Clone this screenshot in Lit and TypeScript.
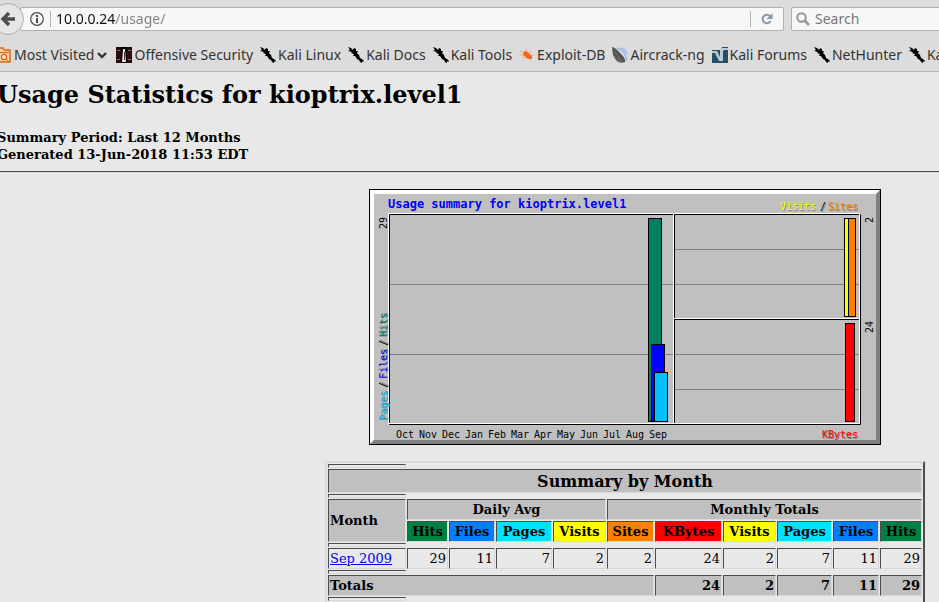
import { LitElement, html, svg, css } from "lit";
import { customElement } from "lit/decorators.js";

const kali = svg`<path d="M0 0L3 1 5 3 6 1 8 2 8 4 10 4 9 6 11 8 12 11 14 12 16 14 15 15 14 14 14 16 12 15 11 13 9 12 7 9 5 9 6 7 3 6 4 5 0 4 2 3Z" fill="#000"/>`;

const icons: Record<string, unknown> = {
  kali,
  offsec: svg`<path fill="#2a0c0c" d="M0 0h16v16H0z"/><path fill="#777" d="M1 3h3v1H1zM12 3h3v1h-3zM1 12h3v1H1zM12 12h3v1h-3z"/><path fill="#000" d="M5 0h6v16H5z"/><path fill="#e4e4e4" d="M7 2h2l1 13H6z"/><path fill="#633" d="M8 5h1v8H8z"/>`,
  exploit: svg`<path fill="#f2661f" d="M4 5l3-1 3 2 3 3v3l-3 0-3-1-3-3z"/><path d="M1 4l4 2M0 8l5 0M3 11l4-2M7 2l1 3M12 4l-2 3M15 8l-3 1M12 14l-2-2" stroke="#f5ac80"/>`,
  aircrack: svg`<path d="M0 0Q3 0 9 7Q14 12 13 15Q5 18 1 8Z" fill="#50544e"/><path d="M2 4l8 10M1 8l8 7" stroke="#777c73" fill="none"/><path d="M5 1Q13 3 15 14M9 1Q14 3 15 7" stroke="#9cb8ea" fill="none" stroke-width="1.5"/>`,
  forums: svg`<path fill="#244f69" d="M0 0h16v16H0z"/><path fill="#dcdcdc" d="M0 0h10L9 3H0z"/><path fill="#b9cbd5" d="M0 4h5l3 6V3l2-2h6v2h-4l-1 1v10H7L3 6H0z"/>`,
};

const bookmarks: [string, string][] = [
  ["offsec", "Offensive Security"],
  ["kali", "Kali Linux"],
  ["kali", "Kali Docs"],
  ["kali", "Kali Tools"],
  ["exploit", "Exploit-DB"],
  ["aircrack", "Aircrack-ng"],
  ["forums", "Kali Forums"],
  ["kali", "NetHunter"],
  ["kali", "Kali Training"],
];

@customElement("browser-chrome")
class BrowserChrome extends LitElement {
  static styles = css`
    :host { display: block; flex: none; background: #dcdcdc; border-bottom: 1px solid #b2b2b2; padding-top: 7px; overflow: hidden;
      font: 14px/20px "Noto Sans", sans-serif; color: #333; }
    .nav { display: flex; height: 24px; }
    .back { flex: none; box-sizing: border-box; width: 32px; height: 32px; margin: -4px -4px -4px -8px; padding: 0; border: 1px solid #b0b0b0;
      border-radius: 50%; background: #e6e6e6; z-index: 1; display: grid; place-items: center; }
    .field { box-sizing: border-box; height: 24px; min-width: 0; display: flex; align-items: center; background: #f7f7f7; border: 1px solid #b0b0b0; border-radius: 2px; }
    .address { flex: 1; padding-left: 9px; }
    .search { flex: 0 0 156px; margin: 0 -8px 0 7px; padding-left: 4px; gap: 5px; }
    .rule { flex: none; width: 1px; height: 16px; background: #b5b5b5; margin: 0 5px 0 6px; }
    .rule:last-of-type { margin-right: 0; }
    input { flex: 1; min-width: 0; height: 20px; padding: 0; border: 0; outline: 0; background: none; font: inherit; color: #777; }
    input::placeholder { color: #777; opacity: 1; }
    .url { background: linear-gradient(90deg, #111 59px, #808080 59px); -webkit-background-clip: text; background-clip: text; color: transparent; }
    .reload { flex: none; padding: 0; border: 0; background: none; width: 32px; height: 20px; display: grid; place-items: center; }
    .marks { display: flex; align-items: center; height: 32px; padding-top: 8px; margin-left: -5px; gap: 7px; white-space: nowrap; }
    a { display: flex; align-items: center; gap: 2px; flex: none; color: inherit; text-decoration: none; height: 32px; }
    .visited { gap: 3px; margin-right: 2px; }
    svg { display: block; flex: none; }
  `;
  render() {
    return html`
      <div class="nav">
        <button class="back" aria-label="Back"><svg width="16" height="16" viewBox="0 0 16 16"><path d="M9 2L3 8l6 6M4 8h11" fill="none" stroke="#4d4d4d" stroke-width="3.4"/></svg></button>
        <div class="field address">
          <svg width="14" height="14" viewBox="0 0 14 14"><circle cx="7" cy="7" r="6.3" fill="none" stroke="#4a4a4a" stroke-width="1.2"/><path d="M6 6h2v5H6zM6 3h2v2H6z" fill="#4a4a4a"/></svg>
          <span class="rule"></span>
          <input class="url" aria-label="Address" value="10.0.0.24/usage/">
          <span class="rule"></span>
          <button class="reload" aria-label="Reload"><svg width="12" height="12" viewBox="0 0 12 12"><path d="M9 3.2A4.2 4.2 0 1 0 9.6 8" fill="none" stroke="#8a96a3" stroke-width="2"/><path d="M11.500 0v6h-6z" fill="#8a96a3"/></svg></button>
        </div>
        <div class="field search">
          <svg width="14" height="14" viewBox="0 0 14 14"><circle cx="5.500" cy="5.500" r="4.200" fill="none" stroke="#969696" stroke-width="2"/><path d="M8.500 8.500l4.500 4.500" stroke="#969696" stroke-width="2.600"/></svg>
          <input aria-label="Search" placeholder="Search">
        </div>
      </div>
      <div class="marks">
        <a class="visited" href="#"><svg width="16" height="16" viewBox="0 0 16 16"><path d="M1 15V1h7l1 2h6v12z" fill="#f9d3ae" stroke="#d9660a" stroke-width="1.400"/><circle cx="9" cy="10" r="2.600" fill="#fbe3cb" stroke="#d9660a" stroke-width="1.200"/><path d="M2 5.500h12M11 12l3 3" stroke="#d9660a"/></svg>Most Visited<svg width="10" height="8" viewBox="0 0 10 8"><path d="M1 2l4 4 4-4" fill="none" stroke="#333" stroke-width="2.400"/></svg></a>
        ${bookmarks.map(([icon, name]) => html`<a href="#"><svg width="16" height="16" viewBox="0 0 16 16">${icons[icon]}</svg>${name}</a>`)}
      </div>`;
  }
}

const months = ["Oct", "Nov", "Dec", "Jan", "Feb", "Mar", "Apr", "May", "Jun", "Jul", "Aug", "Sep"];

const bars: [number, number, number, number, string][] = [
  [279, 29, 14, 204, "#008060"],
  [282, 155, 14, 78, "#0000ff"],
  [285, 183, 14, 50, "#00c0ff"],
  [475, 29, 8, 99, "#ffff00"],
  [479, 29, 8, 99, "#ff8000"],
  [476, 134, 10, 99, "#ff0000"],
];

@customElement("usage-chart")
class UsageChart extends LitElement {
  static styles = css`
    :host { display: block; width: 512px; height: 256px; }
    svg { display: block; }
    text { font: 10px "DejaVu Sans Mono", monospace; white-space: pre; }
    .title { font-size: 12px; font-weight: bold; fill: #00f; }
  `;
  label(x: number, y: number, text: string, fill: string) {
    return svg`<text x=${x + 1} y=${y + 1} fill="#808080">${text}</text><text x=${x} y=${y} fill=${fill}>${text}</text>`;
  }
  side(x: number, y: number, text: string, fill: string, shadow = true) {
    return svg`<g transform="translate(${x} ${y}) rotate(-90)">${shadow ? this.label(0, 0, text, fill) : svg`<text fill=${fill}>${text}</text>`}</g>`;
  }
  render() {
    const frame = svg`<path d="M19.500 24.500H490.500V234.500H19.500ZM304.500 24.500V234.500M304.500 129.500H490.500"/>`;
    return html`<svg width="512" height="256" viewBox="0 0 512 256" role="img" aria-label="Usage summary for kioptrix.level1">
      <path fill="#000" d="M0 0h512v256H0z"/>
      <path fill="#808080" d="M1 1h510v254H1z"/>
      <path fill="#fff" d="M1 1H511L507 5H5V251L1 255Z"/>
      <path fill="#c0c0c0" d="M5 5h502v246H5z"/>
      <path stroke="#808080" d="M21 95.500h283M21 165.500h283M306 60.500h184M306 95.500h184M306 165.500h184M306 200.500h184"/>
      <g fill="none" stroke="#000" transform="translate(1 1)">${frame}</g>
      <g fill="none" stroke="#fff">${frame}</g>
      ${bars.map(([x, y, w, h, c]) => svg`<rect x=${x + 0.5} y=${y + 0.5} width=${w - 1} height=${h - 1} fill=${c} stroke="#000"/>`)}
      <text class="title" x="19" y="19">Usage summary for kioptrix.level1</text>
      ${this.label(411, 21, "Visits", "#ffff00")}
      ${this.label(451, 21, "/", "#000")}
      ${this.label(459, 21, "Sites", "#ff8000")}
      ${this.label(453, 249, "KBytes", "#ff0000")}
      ${months.map((m, i) => svg`<text x=${27 + i * 23} y="249">${m}</text>`)}
      ${this.side(18, 40, "29", "#000", false)}
      ${this.side(504, 34, "2", "#000", false)}
      ${this.side(504, 144, "24", "#000", false)}
      ${this.side(18, 232, "Pages", "#00c0ff")}
      ${this.side(18, 199, "/", "#000")}
      ${this.side(18, 190, "Files", "#0000ff")}
      ${this.side(18, 157, "/", "#000")}
      ${this.side(18, 148, "Hits", "#008060")}
    </svg>`;
  }
}

const columns = [78, 41, 46, 56, 53, 47, 67, 53, 55, 46, 42];
const heads: [string, string][] = [
  ["Hits", "green"], ["Files", "blue"], ["Pages", "cyan"], ["Visits", "yellow"], ["Sites", "orange"],
  ["KBytes", "red"], ["Visits", "yellow"], ["Pages", "cyan"], ["Files", "blue"], ["Hits", "green"],
];

@customElement("summary-table")
class SummaryTable extends LitElement {
  static styles = css`
    :host { display: block; width: 600px; }
    table { width: 100%; table-layout: fixed; border: 2px solid; border-color: #d8d8d8 #4c4c4c #4c4c4c #d8d8d8; border-spacing: 1px;
      font: 13px/17px "DejaVu Serif", serif; color: #000; }
    th, td { box-sizing: border-box; height: 21px; padding: 1px; border: 1px solid; border-color: #4c4c4c #d8d8d8 #d8d8d8 #4c4c4c; text-align: right; white-space: nowrap; }
    .gap th { height: 4px; padding: 0; line-height: 0; }
    .gray { background: #c0c0c0; }
    .mid { text-align: center; }
    .left { text-align: left; }
    .big { height: 24px; padding: 2px 0 0; font-size: 16px; line-height: 20px; }
    .green { background: #008040; }
    .blue { background: #0080ff; }
    .cyan { background: #00e0ff; }
    .yellow { background: #ffff00; }
    .orange { background: #ff8000; }
    .red { background: #ff0000; }
    a { color: #0000ee; }
  `;
  render() {
    const gap = html`<tr class="gap"><th></th></tr>`;
    return html`<table>
      <colgroup>${columns.map((w) => html`<col style="width:${w}px">`)}</colgroup>
      <tbody>
        ${gap}
        <tr><th class="gray mid big" colspan="11">Summary by Month</th></tr>
        ${gap}
        <tr><th class="gray left" rowspan="2">Month</th><th class="gray mid" colspan="4">Daily Avg</th><th class="gray mid" colspan="6">Monthly Totals</th></tr>
        <tr>${heads.map(([name, tone]) => html`<th class="mid ${tone}">${name}</th>`)}</tr>
        ${gap}
        <tr><td class="left"><a href="#">Sep 2009</a></td>${[29, 11, 7, 2, 2, 24, 2, 7, 11, 29].map((n) => html`<td>${n}</td>`)}</tr>
        ${gap}
        <tr><th class="gray left" colspan="6">Totals</th>${[24, 2, 7, 11, 29].map((n) => html`<th class="gray">${n}</th>`)}</tr>
        ${gap}
      </tbody>
    </table>`;
  }
}

@customElement("app-root")
class AppRoot extends LitElement {
  static styles = css`
    :host { display: flex; flex-direction: column; height: 100vh; overflow: hidden; background: #e8e8e8; color: #000; font-family: "DejaVu Serif", serif; }
    .page { flex: 1; min-height: 0; overflow: auto; scrollbar-width: none; }
    h2 { margin: 9px 0 0 -3px; font-size: 24px; line-height: 28px; }
    .period { margin: 20px 0 8px -3px; font-size: 13px; line-height: 17px; font-weight: bold; }
    hr { margin: 0; border: solid; border-width: 1px 0; border-color: #4c4c4c transparent #d8d8d8; }
    .figures { display: flex; flex-direction: column; align-items: center; gap: 16px; padding: 16px 0 0 311px; }
  `;
  render() {
    return html`
      <browser-chrome></browser-chrome>
      <main class="page">
        <h2>Usage Statistics for kioptrix.level1</h2>
        <p class="period">Summary Period: Last 12 Months<br>Generated 13-Jun-2018 11:53 EDT</p>
        <hr>
        <div class="figures">
          <usage-chart></usage-chart>
          <summary-table></summary-table>
        </div>
      </main>`;
  }
}
